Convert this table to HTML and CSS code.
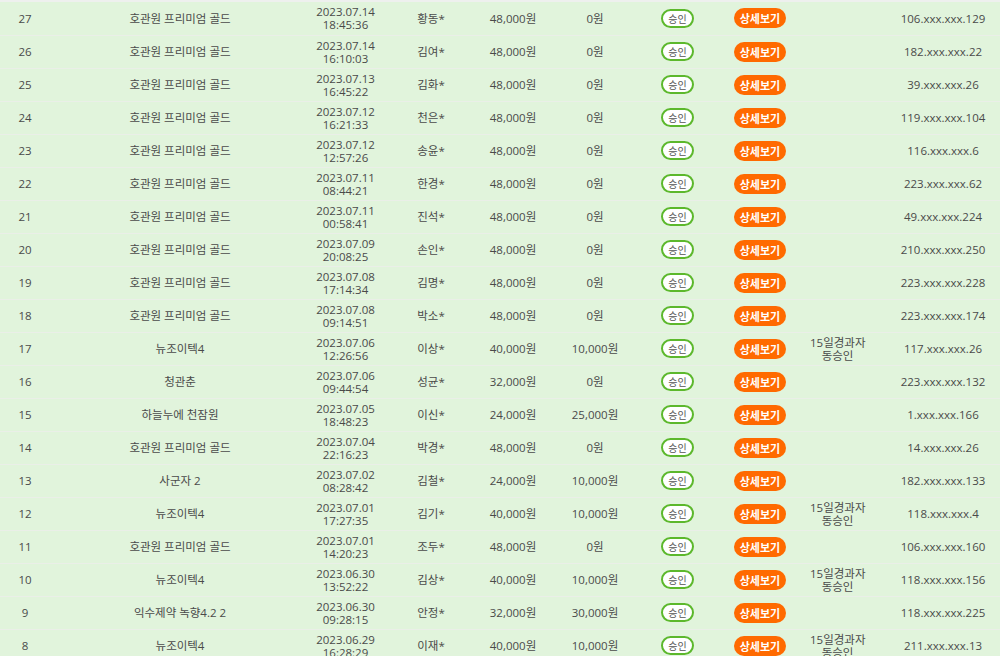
FILE: index.html
```html
<!DOCTYPE html>
<html lang="ko">
<head>
<meta charset="utf-8">
<title>주문 목록</title>
<link rel="stylesheet" href="styles.css">
</head>
<body>
<div class="wrap">
<table class="list">
<colgroup>
<col class="c-no"><col class="c-prod"><col class="c-date"><col class="c-name"><col class="c-price"><col class="c-disc"><col class="c-stat"><col class="c-btn"><col class="c-note"><col class="c-ip">
</colgroup>
<tbody>
<tr><td>27</td><td>호관원 프리미엄 골드</td><td class="date">2023.07.14<br>18:45:36</td><td>황동*</td><td>48,000원</td><td>0원</td><td><span class="badge">승인</span></td><td><span class="btn">상세보기</span></td><td></td><td>106.xxx.xxx.129</td></tr>
<tr><td>26</td><td>호관원 프리미엄 골드</td><td class="date">2023.07.14<br>16:10:03</td><td>김여*</td><td>48,000원</td><td>0원</td><td><span class="badge">승인</span></td><td><span class="btn">상세보기</span></td><td></td><td>182.xxx.xxx.22</td></tr>
<tr><td>25</td><td>호관원 프리미엄 골드</td><td class="date">2023.07.13<br>16:45:22</td><td>김화*</td><td>48,000원</td><td>0원</td><td><span class="badge">승인</span></td><td><span class="btn">상세보기</span></td><td></td><td>39.xxx.xxx.26</td></tr>
<tr><td>24</td><td>호관원 프리미엄 골드</td><td class="date">2023.07.12<br>16:21:33</td><td>천은*</td><td>48,000원</td><td>0원</td><td><span class="badge">승인</span></td><td><span class="btn">상세보기</span></td><td></td><td>119.xxx.xxx.104</td></tr>
<tr><td>23</td><td>호관원 프리미엄 골드</td><td class="date">2023.07.12<br>12:57:26</td><td>송윤*</td><td>48,000원</td><td>0원</td><td><span class="badge">승인</span></td><td><span class="btn">상세보기</span></td><td></td><td>116.xxx.xxx.6</td></tr>
<tr><td>22</td><td>호관원 프리미엄 골드</td><td class="date">2023.07.11<br>08:44:21</td><td>한경*</td><td>48,000원</td><td>0원</td><td><span class="badge">승인</span></td><td><span class="btn">상세보기</span></td><td></td><td>223.xxx.xxx.62</td></tr>
<tr><td>21</td><td>호관원 프리미엄 골드</td><td class="date">2023.07.11<br>00:58:41</td><td>진석*</td><td>48,000원</td><td>0원</td><td><span class="badge">승인</span></td><td><span class="btn">상세보기</span></td><td></td><td>49.xxx.xxx.224</td></tr>
<tr><td>20</td><td>호관원 프리미엄 골드</td><td class="date">2023.07.09<br>20:08:25</td><td>손인*</td><td>48,000원</td><td>0원</td><td><span class="badge">승인</span></td><td><span class="btn">상세보기</span></td><td></td><td>210.xxx.xxx.250</td></tr>
<tr><td>19</td><td>호관원 프리미엄 골드</td><td class="date">2023.07.08<br>17:14:34</td><td>김명*</td><td>48,000원</td><td>0원</td><td><span class="badge">승인</span></td><td><span class="btn">상세보기</span></td><td></td><td>223.xxx.xxx.228</td></tr>
<tr><td>18</td><td>호관원 프리미엄 골드</td><td class="date">2023.07.08<br>09:14:51</td><td>박소*</td><td>48,000원</td><td>0원</td><td><span class="badge">승인</span></td><td><span class="btn">상세보기</span></td><td></td><td>223.xxx.xxx.174</td></tr>
<tr><td>17</td><td>뉴조이텍4</td><td class="date">2023.07.06<br>12:26:56</td><td>이상*</td><td>40,000원</td><td>10,000원</td><td><span class="badge">승인</span></td><td><span class="btn">상세보기</span></td><td class="note">15일경과자<br>동승인</td><td>117.xxx.xxx.26</td></tr>
<tr><td>16</td><td>청관춘</td><td class="date">2023.07.06<br>09:44:54</td><td>성균*</td><td>32,000원</td><td>0원</td><td><span class="badge">승인</span></td><td><span class="btn">상세보기</span></td><td></td><td>223.xxx.xxx.132</td></tr>
<tr><td>15</td><td>하늘누에 천잠원</td><td class="date">2023.07.05<br>18:48:23</td><td>이신*</td><td>24,000원</td><td>25,000원</td><td><span class="badge">승인</span></td><td><span class="btn">상세보기</span></td><td></td><td>1.xxx.xxx.166</td></tr>
<tr><td>14</td><td>호관원 프리미엄 골드</td><td class="date">2023.07.04<br>22:16:23</td><td>박경*</td><td>48,000원</td><td>0원</td><td><span class="badge">승인</span></td><td><span class="btn">상세보기</span></td><td></td><td>14.xxx.xxx.26</td></tr>
<tr><td>13</td><td>사군자 2</td><td class="date">2023.07.02<br>08:28:42</td><td>김철*</td><td>24,000원</td><td>10,000원</td><td><span class="badge">승인</span></td><td><span class="btn">상세보기</span></td><td></td><td>182.xxx.xxx.133</td></tr>
<tr><td>12</td><td>뉴조이텍4</td><td class="date">2023.07.01<br>17:27:35</td><td>김기*</td><td>40,000원</td><td>10,000원</td><td><span class="badge">승인</span></td><td><span class="btn">상세보기</span></td><td class="note">15일경과자<br>동승인</td><td>118.xxx.xxx.4</td></tr>
<tr><td>11</td><td>호관원 프리미엄 골드</td><td class="date">2023.07.01<br>14:20:23</td><td>조두*</td><td>48,000원</td><td>0원</td><td><span class="badge">승인</span></td><td><span class="btn">상세보기</span></td><td></td><td>106.xxx.xxx.160</td></tr>
<tr><td>10</td><td>뉴조이텍4</td><td class="date">2023.06.30<br>13:52:22</td><td>김상*</td><td>40,000원</td><td>10,000원</td><td><span class="badge">승인</span></td><td><span class="btn">상세보기</span></td><td class="note">15일경과자<br>동승인</td><td>118.xxx.xxx.156</td></tr>
<tr><td>9</td><td>익수제약 녹향4.2 2</td><td class="date">2023.06.30<br>09:28:15</td><td>안정*</td><td>32,000원</td><td>30,000원</td><td><span class="badge">승인</span></td><td><span class="btn">상세보기</span></td><td></td><td>118.xxx.xxx.225</td></tr>
<tr><td>8</td><td>뉴조이텍4</td><td class="date">2023.06.29<br>16:28:29</td><td>이재*</td><td>40,000원</td><td>10,000원</td><td><span class="badge">승인</span></td><td><span class="btn">상세보기</span></td><td class="note">15일경과자<br>동승인</td><td>211.xxx.xxx.13</td></tr>
</tbody>
</table>
</div>
</body>
</html>
```

FILE: styles.css
```css
html, body {
  margin: 0;
  padding: 0;
  background: #e1f4dc;
  overflow: hidden;
}
.wrap {
  width: 1000px;
  height: 656px;
  overflow: hidden;
  border-top: 2px solid #eef0ee;
  box-sizing: border-box;
}
.list {
  width: 1021px;
  table-layout: fixed;
  border-collapse: collapse;
  font-family: "Open Sans", "Noto Sans CJK KR", sans-serif;
  font-size: 11.5px;
  color: #4a4a4a;
}
.c-no { width: 50px; }
.c-prod { width: 260px; }
.c-date { width: 71px; }
.c-name { width: 100px; }
.c-price { width: 64px; }
.c-disc { width: 100px; }
.c-stat { width: 65px; }
.c-btn { width: 100px; }
.c-note { width: 55px; }
.c-ip { width: 156px; }
.list tr { height: 33px; }
.list td {
  padding: 0;
  text-align: center;
  vertical-align: middle;
  border-bottom: 1px solid #eaefe8;
  white-space: nowrap;
  line-height: 13px;
}
.badge {
  display: inline-block;
  box-sizing: border-box;
  width: 33px;
  height: 19px;
  border: 2px solid #5cb82c;
  border-radius: 10px;
  background: #fff;
  font-size: 10px;
  line-height: 15px;
  color: #555;
  font-family: "Noto Sans CJK KR", sans-serif;
  vertical-align: middle;
}
.btn {
  display: inline-block;
  width: 52px;
  height: 20px;
  border-radius: 10px;
  background: #ff6a00;
  color: #fff;
  font-weight: bold;
  font-size: 11px;
  line-height: 20px;
  font-family: "Noto Sans CJK KR", sans-serif;
  vertical-align: middle;
}
```
